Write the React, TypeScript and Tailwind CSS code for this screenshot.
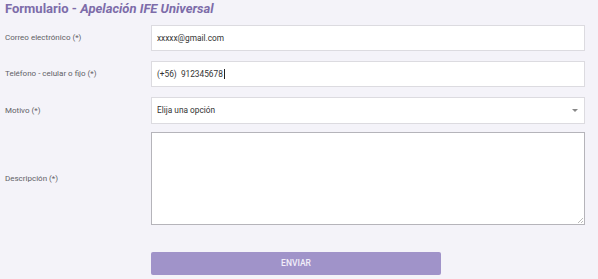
const Field = ({ label, children }: { label: string; children: React.ReactNode }) => (
    <div className="grid grid-cols-[146px_434px] items-center">
        <label className="text-[8px] text-[#5f5f66]">{label}</label>
        {children}
    </div>
);

const inputBox = 'h-[26px] w-full flex items-center bg-white border border-[#dcdbe0] px-[5px] text-[8.3px] text-[#333]';

export default function App() {
    return (
        <div className="min-h-[279px] w-[598px] bg-[#f4f3f9] px-[5px] font-['Roboto',sans-serif]">
            <h1 className="pt-[1px] text-[13px] leading-[16px] font-bold text-[#7d6ca9]">
                Formulario - <span className="italic">Apelación IFE Universal</span>
            </h1>

            <div className="mt-[8px] flex flex-col gap-[10px]">
                <Field label="Correo electrónico (*)">
                    <div className={inputBox}>xxxxx@gmail.com</div>
                </Field>

                <Field label="Teléfono - celular o fijo (*)">
                    <div className={inputBox}>
                        <span className="whitespace-pre">(+56)  912345678</span>
                        <span className="ml-[1px] h-[10px] w-px bg-[#222]" />
                    </div>
                </Field>

                <Field label="Motivo (*)">
                    <div className={`${inputBox} h-[27px] justify-between pr-[6px]`}>
                        <span>Elija una opción</span>
                        <svg width="6" height="3" viewBox="0 0 6 3">
                            <path d="M0 0H6L3 3Z" fill="#888" />
                        </svg>
                    </div>
                </Field>
            </div>

            <div className="mt-[8px]">
                <Field label="Descripción (*)">
                    <div className="relative h-[93px] w-full bg-white border border-[#b5b4ba]">
                        <svg className="absolute right-[1px] bottom-[1px]" width="6" height="6" viewBox="0 0 6 6">
                            <path d="M6 1L1 6M6 4L4 6" stroke="#aaa" strokeWidth="0.8" />
                        </svg>
                    </div>
                </Field>
            </div>

            <div className="mt-[27px] grid grid-cols-[146px_290px]">
                <div />
                <button className="h-[23px] w-full rounded-[2px] bg-[#a093c9] text-[8.5px] font-medium text-[#f1eef9]">
                    ENVIAR
                </button>
            </div>
        </div>
    );
}
